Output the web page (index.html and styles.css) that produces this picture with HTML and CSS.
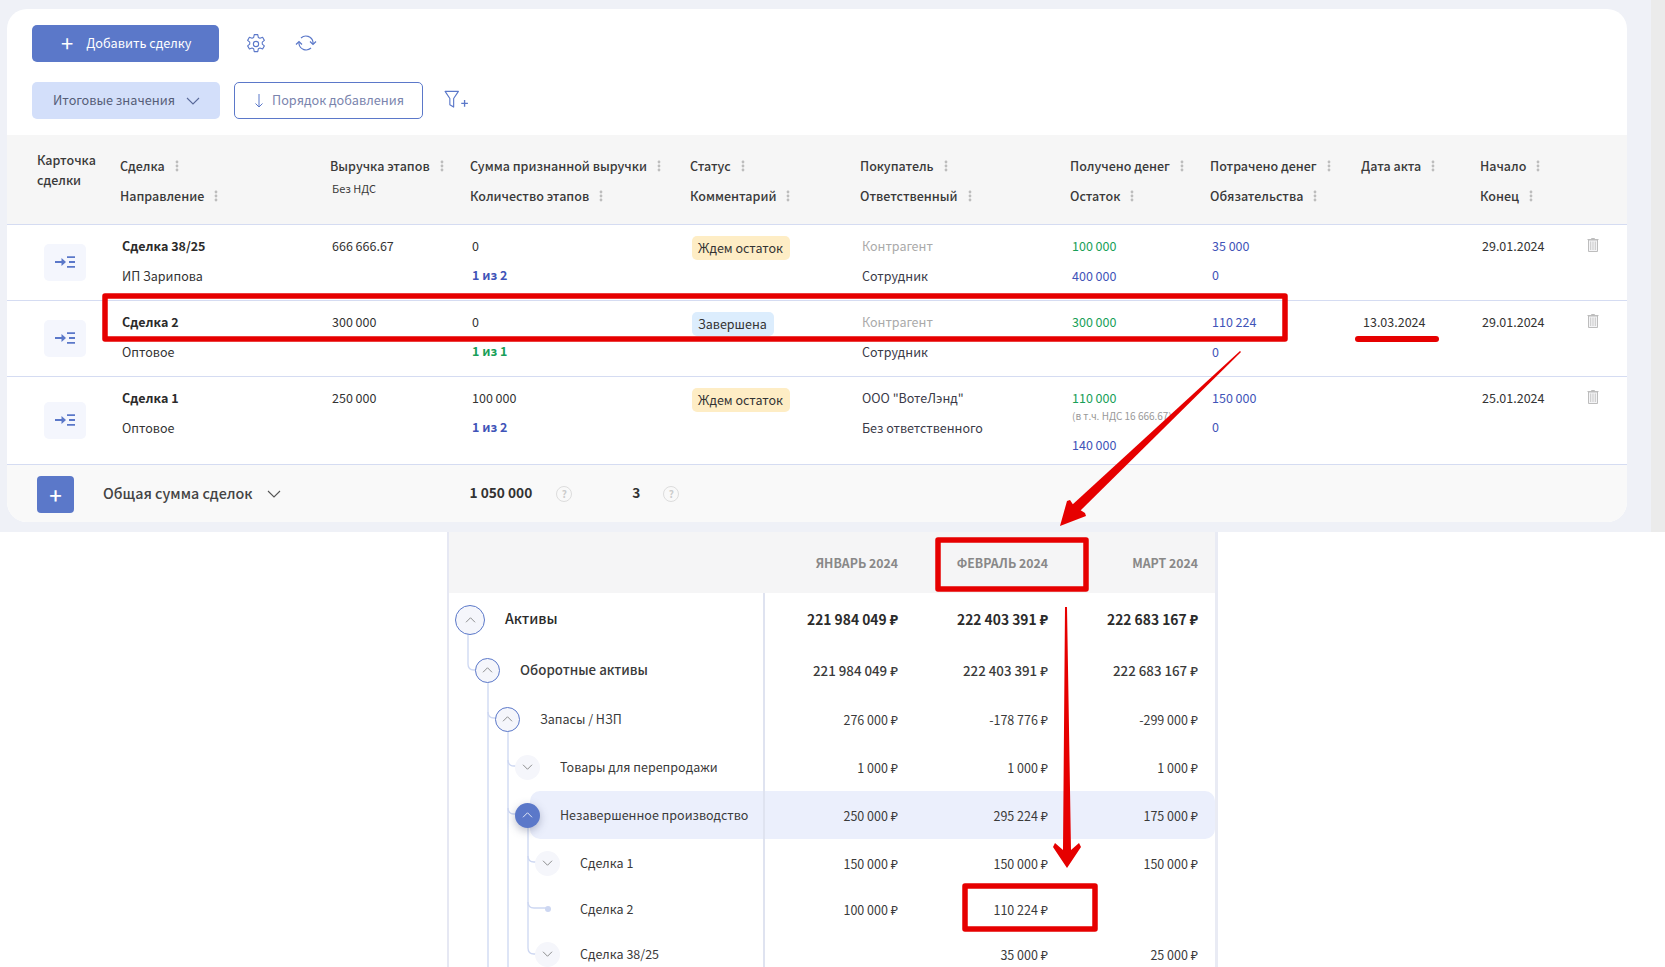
FILE: index.html
```html
<!DOCTYPE html>
<html lang="ru">
<head>
  <meta charset="UTF-8" />
  <title>Сделки</title>
  <link rel="stylesheet" href="styles.css">
</head>
<body>

  <svg class="defs" width="0" height="0">
    <symbol id="kebab" viewBox="0 0 4 12"><circle cx="2" cy="2" r="1.4"/><circle cx="2" cy="6" r="1.4"/><circle cx="2" cy="10" r="1.4"/></symbol>
    <symbol id="chev-down" viewBox="0 0 14 8"><path d="M1 1l6 6 6-6" fill="none" stroke="currentColor" stroke-width="1.1"/></symbol>
    <symbol id="chev-up" viewBox="0 0 14 8"><path d="M1 7l6-6 6 6" fill="none" stroke="currentColor" stroke-width="1.1"/></symbol>
    <symbol id="card" viewBox="0 0 20 12">
      <path d="M0 6h8" fill="none" stroke="#5b78c9" stroke-width="1.8"/>
      <path d="M6.500 2l4.500 4-4.500 4z" fill="#5b78c9"/>
      <path d="M12 1.200h8M14 6h6M12 10.800h8" fill="none" stroke="#5b78c9" stroke-width="1.8"/>
    </symbol>
    <symbol id="trash" viewBox="0 0 12 14">
      <path d="M4.500 1V.5h3V1M.5 1.500h11M1.500 2v11.500h9V2z" fill="#f4f4f6" stroke="#bdbdbd" stroke-width="1"/>
      <path d="M3.700 3.500v8.500M6 3.500v8.500M8.300 3.500v8.500" fill="none" stroke="#c9c9c9" stroke-width="1"/>
    </symbol>
  </svg>

  <div class="top">
    <div class="card">
      <div class="toolbar">
        <button class="btn-add"><span class="plus">+</span><span class="btn-text">Добавить сделку</span></button>
        <svg class="tool-icon gear" viewBox="0 0 20 20" width="22" height="22"><path d="M8.400 1.500h3.200l.5 2.500 1.500.8 2.400-.9 1.600 2.800-1.900 1.600v1.800l1.900 1.600-1.600 2.800-2.400-.9-1.500.8-.5 2.500H8.400l-.5-2.500-1.500-.8-2.400.9-1.600-2.800 1.900-1.600V8.300L2.400 6.700 4 3.900l2.400.9 1.500-.8z" fill="none" stroke="#5b78c9" stroke-width="1" stroke-linejoin="round"/><circle cx="10" cy="10" r="2.400" fill="none" stroke="#5b78c9" stroke-width="1"/></svg>
        <svg class="tool-icon sync" viewBox="0 0 24 20" width="24" height="20"><path d="M7 5a7.200 7.200 0 0 1 12 4v2M17 15a7.200 7.200 0 0 1-12-4V9" fill="none" stroke="#5b78c9" stroke-width="1.200"/><path d="M16 8.500l3 3 3-3M2 11.500l3-3 3 3" fill="none" stroke="#5b78c9" stroke-width="1.200"/></svg>
      </div>
      <div class="toolbar second">
        <button class="btn-chip"><span class="btn-text">Итоговые значения</span><svg class="chev" width="14" height="8"><use href="#chev-down"/></svg></button>
        <button class="btn-sort"><svg width="10" height="15" viewBox="0 0 10 15"><path d="M5 1v13M1.500 10.500L5 14l3.500-3.500" fill="none" stroke="#5b78c9" stroke-width="1"/></svg><span class="btn-text">Порядок добавления</span></button>
        <svg class="tool-icon filter" viewBox="0 0 26 20" width="25" height="19"><path d="M1 1.500h14l-5 7.500v9l-4-2.500V9z" fill="none" stroke="#5b78c9" stroke-width="1.200" stroke-linejoin="round"/><path d="M18 14h7M21.500 10.500v7" fill="none" stroke="#5b78c9" stroke-width="1.400"/></svg>
      </div>

      <div class="deals">
        <div class="deal-row head">
          <div class="h-card">Карточка<br>сделки</div>
          <div><div class="h">Сделка<svg class="kb"><use href="#kebab"/></svg></div><div class="h">Направление<svg class="kb"><use href="#kebab"/></svg></div></div>
          <div><div class="h">Выручка этапов<svg class="kb"><use href="#kebab"/></svg></div><div class="h-sub">Без НДС</div></div>
          <div><div class="h">Сумма признанной выручки<svg class="kb"><use href="#kebab"/></svg></div><div class="h">Количество этапов<svg class="kb"><use href="#kebab"/></svg></div></div>
          <div><div class="h">Статус<svg class="kb"><use href="#kebab"/></svg></div><div class="h">Комментарий<svg class="kb"><use href="#kebab"/></svg></div></div>
          <div><div class="h">Покупатель<svg class="kb"><use href="#kebab"/></svg></div><div class="h">Ответственный<svg class="kb"><use href="#kebab"/></svg></div></div>
          <div><div class="h">Получено денег<svg class="kb"><use href="#kebab"/></svg></div><div class="h">Остаток<svg class="kb"><use href="#kebab"/></svg></div></div>
          <div><div class="h">Потрачено денег<svg class="kb"><use href="#kebab"/></svg></div><div class="h">Обязательства<svg class="kb"><use href="#kebab"/></svg></div></div>
          <div><div class="h">Дата акта<svg class="kb"><use href="#kebab"/></svg></div></div>
          <div><div class="h">Начало<svg class="kb"><use href="#kebab"/></svg></div><div class="h">Конец<svg class="kb"><use href="#kebab"/></svg></div></div>
          <div></div>
        </div>

        <div class="deal-row body">
          <div class="card-cell"><span class="card-btn"><svg width="20" height="12"><use href="#card"/></svg></span></div>
          <div class="cell"><div class="line b">Сделка 38/25</div><div class="line">ИП Зарипова</div></div>
          <div class="cell"><div class="line">666 666.67</div></div>
          <div class="cell"><div class="line">0</div><div class="line blue b up">1 из 2</div></div>
          <div class="cell"><div class="line"><span class="badge wait">Ждем остаток</span></div></div>
          <div class="cell"><div class="line muted">Контрагент</div><div class="line person">Сотрудник</div></div>
          <div class="cell"><div class="line green">100 000</div><div class="line blue">400 000</div></div>
          <div class="cell"><div class="line blue">35 000</div><div class="line blue up">0</div></div>
          <div class="cell"></div>
          <div class="cell"><div class="line">29.01.2024</div></div>
          <div class="cell"><div class="line"><svg class="trash"><use href="#trash"/></svg></div></div>
        </div>

        <div class="deal-row body">
          <div class="card-cell"><span class="card-btn"><svg width="20" height="12"><use href="#card"/></svg></span></div>
          <div class="cell"><div class="line b">Сделка 2</div><div class="line">Оптовое</div></div>
          <div class="cell"><div class="line">300 000</div></div>
          <div class="cell"><div class="line">0</div><div class="line green b up">1 из 1</div></div>
          <div class="cell"><div class="line"><span class="badge done">Завершена</span></div></div>
          <div class="cell"><div class="line muted">Контрагент</div><div class="line person">Сотрудник</div></div>
          <div class="cell"><div class="line green">300 000</div></div>
          <div class="cell"><div class="line blue">110 224</div><div class="line blue">0</div></div>
          <div class="cell"><div class="line">13.03.2024</div></div>
          <div class="cell"><div class="line">29.01.2024</div></div>
          <div class="cell"><div class="line"><svg class="trash"><use href="#trash"/></svg></div></div>
        </div>

        <div class="deal-row body tall">
          <div class="card-cell"><span class="card-btn"><svg width="20" height="12"><use href="#card"/></svg></span></div>
          <div class="cell"><div class="line b">Сделка 1</div><div class="line">Оптовое</div></div>
          <div class="cell"><div class="line">250 000</div></div>
          <div class="cell"><div class="line">100 000</div><div class="line blue b up">1 из 2</div></div>
          <div class="cell"><div class="line"><span class="badge wait">Ждем остаток</span></div></div>
          <div class="cell"><div class="line person">ООО "ВотеЛэнд"</div><div class="line person">Без ответственного</div></div>
          <div class="cell"><div class="line green">110 000</div><div class="note">(в т.ч. НДС 16 666.67)</div><div class="line blue">140 000</div></div>
          <div class="cell"><div class="line blue">150 000</div><div class="line blue up">0</div></div>
          <div class="cell"></div>
          <div class="cell"><div class="line">25.01.2024</div></div>
          <div class="cell"><div class="line"><svg class="trash"><use href="#trash"/></svg></div></div>
        </div>

        <div class="totals">
          <button class="btn-plus">+</button>
          <span class="totals-name">Общая сумма сделок</span>
          <svg class="totals-chev" width="14" height="8"><use href="#chev-down"/></svg>
          <span class="totals-sum">1 050 000</span>
          <span class="help">?</span>
          <span class="totals-count">3</span>
          <span class="help">?</span>
        </div>
      </div>
    </div>
    <div class="scroll-track"></div>
  </div>

  <div class="fin">
    <svg class="tree-lines" width="340" height="440" viewBox="0 0 340 440">
      <g fill="none" stroke="#cdd7f2" stroke-width="1.300">
        <path d="M20 100v32q0 6 6 6h2"/>
        <path d="M40 150v290"/>
        <path d="M40 180q0 6 6 6h2"/>
        <path d="M60 198v242"/>
        <path d="M60 228q0 6 6 6h4M60 276q0 6 6 6h4"/>
        <path d="M80 294v122q0 6 6 6h2"/>
        <path d="M80 324q0 6 6 6h2M80 370q0 6 6 6h14"/>
      </g>
    </svg>

    <div class="fin-row fin-head">
      <div class="label"></div>
      <div class="val">ЯНВАРЬ 2024</div>
      <div class="val">ФЕВРАЛЬ 2024</div>
      <div class="val">МАРТ 2024</div>
    </div>

    <div class="fin-row r52 strong">
      <div class="label lv0"><span class="node big"><svg width="11" height="6"><use href="#chev-up"/></svg></span><span class="name">Активы</span></div>
      <div class="val">221 984 049 ₽</div><div class="val">222 403 391 ₽</div><div class="val">222 683 167 ₽</div>
    </div>
    <div class="fin-row r50 semi">
      <div class="label lv1"><span class="node ring"><svg width="11" height="6"><use href="#chev-up"/></svg></span><span class="name">Оборотные активы</span></div>
      <div class="val">221 984 049 ₽</div><div class="val">222 403 391 ₽</div><div class="val">222 683 167 ₽</div>
    </div>
    <div class="fin-row r48">
      <div class="label lv2"><span class="node ring"><svg width="11" height="6"><use href="#chev-up"/></svg></span><span class="name">Запасы / НЗП</span></div>
      <div class="val">276 000 ₽</div><div class="val">-178 776 ₽</div><div class="val">-299 000 ₽</div>
    </div>
    <div class="fin-row r48">
      <div class="label lv3"><span class="node"><svg width="11" height="6"><use href="#chev-down"/></svg></span><span class="name">Товары для перепродажи</span></div>
      <div class="val">1 000 ₽</div><div class="val">1 000 ₽</div><div class="val">1 000 ₽</div>
    </div>
    <div class="fin-row r48 active">
      <div class="label lv3"><span class="node on"><svg width="11" height="6"><use href="#chev-up"/></svg></span><span class="name">Незавершенное производство</span></div>
      <div class="val">250 000 ₽</div><div class="val">295 224 ₽</div><div class="val">175 000 ₽</div>
    </div>
    <div class="fin-row r48">
      <div class="label lv4"><span class="node"><svg width="11" height="6"><use href="#chev-down"/></svg></span><span class="name">Сделка 1</span></div>
      <div class="val">150 000 ₽</div><div class="val">150 000 ₽</div><div class="val">150 000 ₽</div>
    </div>
    <div class="fin-row r44">
      <div class="label lv4"><span class="node leaf"></span><span class="name">Сделка 2</span></div>
      <div class="val">100 000 ₽</div><div class="val">110 224 ₽</div><div class="val"></div>
    </div>
    <div class="fin-row r46">
      <div class="label lv4"><span class="node"><svg width="11" height="6"><use href="#chev-down"/></svg></span><span class="name">Сделка 38/25</span></div>
      <div class="val"></div><div class="val">35 000 ₽</div><div class="val">25 000 ₽</div>
    </div>
  </div>

  <!-- red marks drawn over the screenshot -->
  <svg class="marks" width="1665" height="967" viewBox="0 0 1665 967">
    <g fill="none" stroke="#e60000" stroke-width="5.500" stroke-linejoin="round">
      <rect x="105" y="296" width="1180" height="43"/>
      <rect x="938" y="540" width="148" height="49"/>
      <rect x="965" y="886" width="130" height="43"/>
    </g>
    <rect x="1355" y="336" width="84" height="6" rx="3" fill="#e60000"/>
    <g fill="#e60000">
      <polygon points="1240,351 1241,352 1079,512 1072,505"/>
      <polygon points="1060,526 1067,501 1070,500 1074,506 1085,513 1086,516"/>
      <polygon points="1065,607 1067,607 1071,850 1079,843 1081,847 1067,868 1053,847 1055,843 1063,850"/>
    </g>
  </svg>

</body>
</html>
```

FILE: styles.css
```css
* {
  box-sizing: border-box;
}

html, body {
  height: 967px;
  overflow: hidden;
}

body {
  margin: 0;
  position: relative;
  background: #fff;
  font-family: "Noto Sans CJK SC", "Noto Sans", sans-serif;
  font-size: 12.500px;
  color: #333;
}

button {
  font-family: inherit;
  border: none;
  cursor: pointer;
}

.defs {
  position: absolute;
}

.top {
  display: flex;
  height: 532px;
  padding: 9px 0 10px 7px;
  background: #eff1f7;
  position: relative;
}

.card {
  width: 1620px;
  background: #fff;
  border-radius: 20px;
  overflow: hidden;
}

.scroll-track {
  position: absolute;
  top: 0;
  right: 0;
  width: 14px;
  height: 100%;
  background: #ebebeb;
}

.toolbar {
  display: flex;
  align-items: center;
  height: 37px;
  margin: 16px 0 0 25px;
}

.toolbar.second {
  margin-top: 20px;
}

.btn-text {
  white-space: nowrap;
  padding-bottom: 2px;
}

.btn-add {
  display: flex;
  align-items: center;
  width: 187px;
  height: 37px;
  padding-left: 29px;
  background: #5b78c9;
  color: #fff;
  font-size: 12.700px;
  border-radius: 5px;
}

.plus {
  font-size: 22px;
  font-weight: 400;
  line-height: 1;
  margin-right: 13px;
  padding-bottom: 3px;
}

.tool-icon.gear {
  margin-left: 26px;
}

.tool-icon.sync {
  margin: 0 0 2px 27px;
}

.btn-chip {
  display: flex;
  align-items: center;
  justify-content: space-between;
  width: 188px;
  height: 37px;
  padding: 0 20px 0 21px;
  background: #d3dffa;
  color: #555d78;
  font-size: 12.700px;
  border-radius: 5px;
}

.chev {
  color: #5a6a9a;
}

.btn-sort {
  display: flex;
  align-items: center;
  gap: 8px;
  width: 189px;
  height: 37px;
  margin-left: 14px;
  padding-left: 19px;
  background: #fff;
  border: 1px solid #5b78c9;
  border-radius: 5px;
  color: #7a84ad;
  font-size: 12.700px;
}

.second .filter {
  margin: 0 0 2px 21px;
}

.deals {
  margin-top: 16px;
}

.deal-row {
  display: grid;
  grid-template-columns: 113px 210px 140px 220px 170px 210px 140px 151px 119px 107px 40px;
}

.head {
  height: 90px;
  background: #f6f6f6;
  border-bottom: 1px solid #d5dcf2;
  font-weight: 500;
  color: #3a3a3a;
}

.h-card {
  padding: 15px 0 0 30px;
  line-height: 20px;
}

.h {
  display: flex;
  align-items: center;
  height: 30px;
  line-height: 30px;
}

.head > div > .h:first-child {
  margin-top: 15.500px;
}

.kb {
  width: 4px;
  height: 12px;
  margin-left: 10px;
  fill: #bdbdbd;
}

.h-sub {
  font-size: 11px;
  font-weight: 400;
  padding-left: 2px;
  margin-top: -1px;
}

.body {
  height: 76px;
  border-bottom: 1px solid #d5dcf2;
  background: #fff;
}

.tall {
  height: 88px;
}

.card-cell {
  display: flex;
  align-items: center;
  padding: 0 0 1px 37px;
}

.card-btn {
  display: flex;
  align-items: center;
  justify-content: center;
  width: 42px;
  height: 37px;
  background: #f4f6fd;
  border-radius: 5px;
}

.cell {
  padding: 5px 0 0 2px;
}

.line {
  display: flex;
  align-items: center;
  height: 30.500px;
  white-space: nowrap;
}

.b {
  font-weight: 700;
}

.cell > .b:first-child {
  color: #2b2b2b;
}

.up {
  margin-top: -1px;
}

.muted {
  color: #aaa;
}

.person {
  color: #3a3a48;
}

.blue {
  color: #3f54b8;
}

.green {
  color: #18a058;
}

.badge {
  display: inline-block;
  height: 24px;
  line-height: 24px;
  margin-top: 5px;
  padding: 0 7px 0 6px;
  border-radius: 5px;
}

.wait {
  background: #feedc5;
}

.done {
  background: #dcedfd;
}

.note {
  height: 14px;
  line-height: 14px;
  margin: -4px 0 7px;
  font-size: 10px;
  color: #999;
  white-space: nowrap;
}

.trash {
  width: 12px;
  height: 14px;
  margin-left: -2px;
}

.totals {
  display: flex;
  align-items: center;
  height: 58px;
  padding-left: 30px;
  background: #f9f9f9;
  color: #444;
}

.totals span {
  margin-bottom: 4px;
}

.totals .help {
  margin-bottom: 1px;
}

.btn-plus {
  width: 37px;
  height: 37px;
  background: #5b78c9;
  color: #fff;
  font-size: 22px;
  font-weight: 500;
  line-height: 1;
  border-radius: 4px;
}

.totals-name {
  margin-left: 29px;
  font-size: 14.300px;
  font-weight: 500;
}

.totals-chev {
  margin-left: 14px;
  color: #555;
}

.totals-sum {
  margin-left: 189px;
  font-size: 13.700px;
  font-weight: 700;
  color: #333;
}

.help {
  width: 16px;
  height: 16px;
  margin-left: 24px;
  border: 1px solid #ddd;
  border-radius: 50%;
  color: #ccc;
  font-size: 10px;
  font-weight: 700;
  line-height: 14px;
  text-align: center;
}

.totals-count {
  margin-left: 60px;
  font-size: 13.700px;
  font-weight: 700;
  color: #333;
}

.totals-count + .help {
  margin-left: 23px;
}

.fin {
  position: relative;
  width: 771px;
  margin-left: 447px;
  border-left: 2px solid #e6e8f3;
  border-right: 3px solid #e9ebf4;
}

.tree-lines {
  position: absolute;
  top: 0;
  left: -1px;
  z-index: 2;
  pointer-events: none;
}

.fin-row {
  position: relative;
  display: grid;
  grid-template-columns: 316px 151px 150px 150px;
  align-items: stretch;
  color: #3a3a3a;
}

.fin-head {
  height: 61px;
  background: #f5f5f6;
  color: #888;
  font-weight: 700;
  font-size: 12.300px;
}

.r52 { height: 52px; }
.r50 { height: 50px; }
.r48 { height: 48px; }
.r46 { height: 46px; }
.r44 { height: 44px; }

.strong {
  font-weight: 700;
  font-size: 13.800px;
  color: #2b2b2b;
}

.strong .name {
  font-size: 14.200px;
  font-weight: 500;
}

.semi {
  font-size: 13.300px;
  font-weight: 500;
}

.active::before {
  content: "";
  position: absolute;
  top: 0;
  bottom: 0;
  left: 81px;
  right: 0;
  background: #ebeffc;
  border-radius: 10px;
}

.label {
  position: relative;
  z-index: 3;
  display: flex;
  align-items: center;
  gap: 20px;
  border-right: 2px solid #dfe3f0;
}

.fin-head .label {
  border-right: none;
}

.lv0 { padding-left: 6px; }
.lv1 { padding-left: 26px; }
.lv2 { padding-left: 46px; }
.lv3 { padding-left: 66px; }
.lv4 { padding-left: 86px; }

.name {
  white-space: nowrap;
  padding-bottom: 2px;
}

.node {
  flex: none;
  display: flex;
  align-items: center;
  justify-content: center;
  width: 25px;
  height: 25px;
  background: #f5f6fb;
  border-radius: 50%;
  color: #777;
}

.ring {
  border: 1.500px solid #5b78c9;
}

.big {
  width: 30px;
  height: 30px;
  margin-top: 2px;
  border: 1.500px solid #5b78c9;
}

.on {
  background: #5b78c9;
  color: #fff;
  box-shadow: 0 3px 8px rgba(60, 70, 110, 0.35);
}

.leaf {
  background: transparent;
}

.leaf::after {
  content: "";
  width: 6px;
  height: 6px;
  border-radius: 50%;
  background: #cdd7f2;
}

.val {
  position: relative;
  display: flex;
  align-items: center;
  justify-content: flex-end;
  padding-right: 18px;
  white-space: nowrap;
}

.marks {
  position: absolute;
  top: 0;
  left: 0;
  z-index: 5;
  pointer-events: none;
}
```
